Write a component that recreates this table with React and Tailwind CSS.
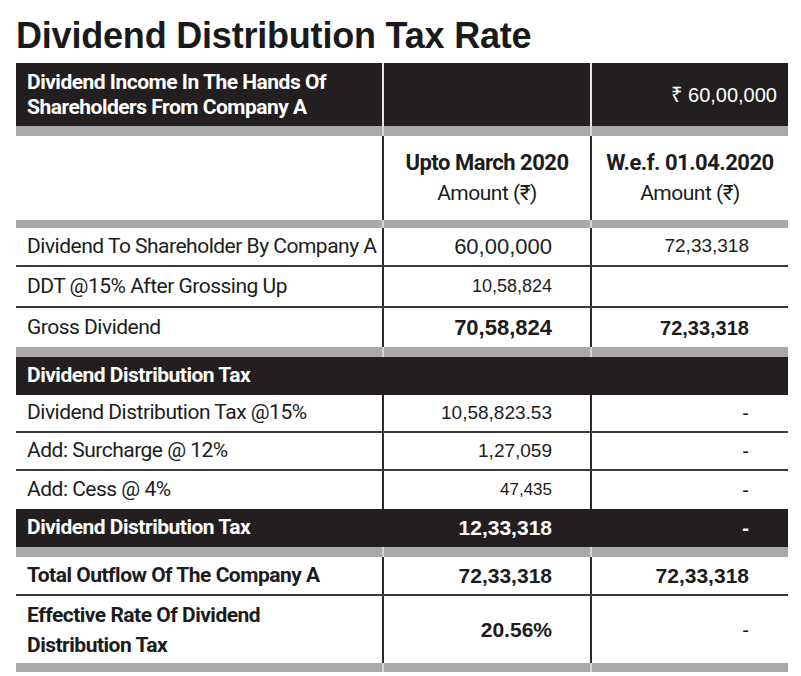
import React from 'react';

const LABEL = "font-['Roboto','Liberation_Sans',sans-serif] tracking-[-0.5px]";
const NUM = "font-['Liberation_Sans','Noto_Sans',sans-serif]";

const GrayBar = ({ h = 'h-[10px]', breaks = false }) => (
  <div className={`grid grid-cols-[366px_208px_198px] ${h}`}>
    <div className="bg-[#a9a9a9]" />
    <div className={`bg-[#a9a9a9] ${breaks ? 'border-l-2 border-[#d6d6d6]' : ''}`} />
    <div className={`bg-[#a9a9a9] ${breaks ? 'border-l-2 border-[#d6d6d6]' : ''}`} />
  </div>
);

const Row = ({ label, a, b, h = 'h-[39px]', line = true, bold = false, boldNum = false, aSize = 'text-[20px]', bSize = 'text-[20px]' }) => (
  <div className={`grid grid-cols-[366px_208px_198px] ${h} ${line ? 'border-b-2 border-[#3a3a3a]' : ''}`}>
    <div className={`flex items-center pl-[11px] text-[21px] whitespace-nowrap text-[#1c1c1c] ${LABEL} ${bold ? 'font-bold' : ''}`}>
      {label}
    </div>
    <div className={`flex items-center justify-end pr-[38px] border-l-2 border-[#2a2a2a] ${aSize} text-[#1c1c1c] ${NUM} ${boldNum ? 'font-bold' : ''}`}>
      {a}
    </div>
    <div className={`flex items-center justify-end pr-[39px] border-l-2 border-[#2a2a2a] ${bSize} text-[#1c1c1c] ${NUM} ${boldNum ? 'font-bold' : ''}`}>
      {b}
    </div>
  </div>
);

export default function App() {
  return (
    <div className="w-[801px] h-[676px] bg-white overflow-hidden">
      <h1 className="pl-[16px] pt-[16px] h-[63px] text-[36px] leading-[40px] font-bold text-[#1a1a1a] tracking-[-0.2px] font-['Liberation_Sans',sans-serif]">
        Dividend Distribution Tax Rate
      </h1>

      <div className="ml-[16px] w-[772px]">
        {/* top black header */}
        <div className="grid grid-cols-[366px_208px_198px] h-[63px] bg-[#231f20] text-white">
          <div className={`flex flex-col justify-center pl-[11px] text-[21px] leading-[25px] font-bold whitespace-nowrap ${LABEL}`}>
            <span>Dividend Income In The Hands Of</span>
            <span>Shareholders From Company A</span>
          </div>
          <div className="border-l-2 border-[#e5e5e5]" />
          <div className={`flex items-center justify-end pr-[11px] border-l-2 border-[#e5e5e5] text-[20px] ${NUM}`}>
            ₹ 60,00,000
          </div>
        </div>
        <GrayBar breaks />

        {/* column headers */}
        <div className="grid grid-cols-[366px_208px_198px] h-[84px] text-[#1c1c1c]">
          <div />
          <div className={`flex flex-col items-center justify-center border-l-2 border-[#2a2a2a] leading-[30px] whitespace-nowrap ${LABEL}`}>
            <span className="text-[22px] font-bold">Upto March 2020</span>
            <span className="text-[21px]">Amount (₹)</span>
          </div>
          <div className={`flex flex-col items-center justify-center border-l-2 border-[#2a2a2a] leading-[30px] whitespace-nowrap ${LABEL}`}>
            <span className="text-[22px] font-bold">W.e.f. 01.04.2020</span>
            <span className="text-[21px]">Amount (₹)</span>
          </div>
        </div>
        <GrayBar h="h-[8px]" breaks />

        <Row label="Dividend To Shareholder By Company A" a="60,00,000" b="72,33,318" aSize="text-[22px]" bSize="text-[19px]" />
        <Row label="DDT @15% After Grossing Up" a="10,58,824" b="" h="h-[41px]" aSize="text-[18px]" />
        <Row label="Gross Dividend" a="70,58,824" b="72,33,318" line={false} boldNum aSize="text-[22px]" bSize="text-[20px]" />
        <GrayBar breaks />

        {/* section header */}
        <div className={`flex items-center h-[38px] bg-[#231f20] pl-[11px] text-white text-[21px] font-bold ${LABEL}`}>
          Dividend Distribution Tax
        </div>

        <Row label="Dividend Distribution Tax @15%" a="10,58,823.53" b="-" h="h-[38px]" aSize="text-[19px]" />
        <Row label="Add: Surcharge @ 12%" a="1,27,059" b="-" h="h-[38px]" aSize="text-[19px]" />
        <Row label="Add: Cess @ 4%" a="47,435" b="-" h="h-[38px]" line={false} aSize="text-[17px]" />

        {/* total black row */}
        <div className="grid grid-cols-[366px_208px_198px] h-[38px] bg-[#231f20] text-white">
          <div className={`flex items-center pl-[11px] text-[21px] font-bold ${LABEL}`}>
            Dividend Distribution Tax
          </div>
          <div className={`flex items-center justify-end pr-[38px] text-[21px] font-bold ${NUM}`}>12,33,318</div>
          <div className={`flex items-center justify-end pr-[39px] text-[20px] font-bold ${NUM}`}>-</div>
        </div>
        <GrayBar breaks />

        <Row label="Total Outflow Of The Company A" a="72,33,318" b="72,33,318" bold boldNum aSize="text-[21px]" bSize="text-[21px]" />
        <div className="grid grid-cols-[366px_208px_198px] h-[67px] text-[#1c1c1c]">
          <div className={`flex flex-col justify-center pl-[11px] text-[21px] leading-[30px] font-bold ${LABEL}`}>
            <span>Effective Rate Of Dividend</span>
            <span>Distribution Tax</span>
          </div>
          <div className={`flex items-center justify-end pr-[38px] border-l-2 border-[#2a2a2a] text-[21px] font-bold ${NUM}`}>20.56%</div>
          <div className={`flex items-center justify-end pr-[39px] border-l-2 border-[#2a2a2a] text-[20px] ${NUM}`}>-</div>
        </div>
        <GrayBar h="h-[9px]" breaks />
      </div>
    </div>
  );
}
